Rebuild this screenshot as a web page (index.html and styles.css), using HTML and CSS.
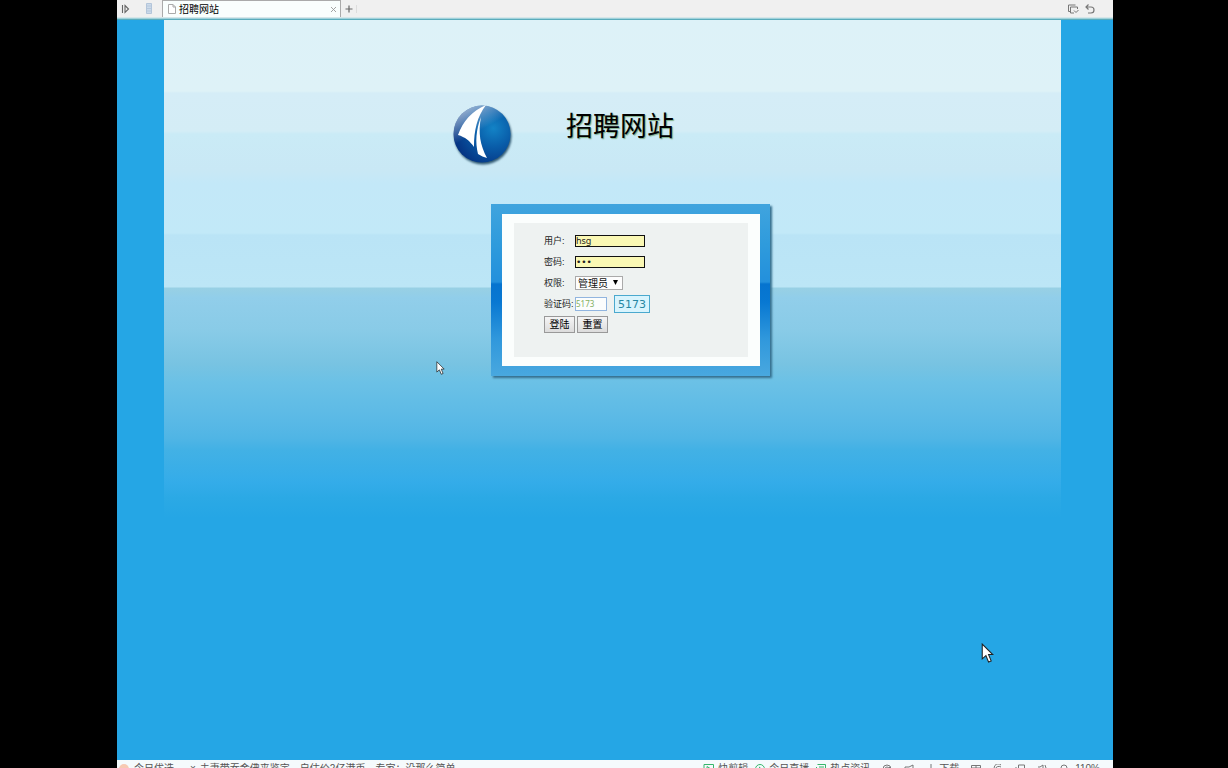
FILE: index.html
```html
<!DOCTYPE html>
<html lang="zh-CN">
<head>
<meta charset="utf-8">
<title>招聘网站</title>
<link rel="stylesheet" href="styles.css">
</head>
<body>
<div class="browser">
  <header class="tabbar">
    <button class="icon-button expand" aria-label="展开"><svg width="10" height="10" viewBox="0 0 10 10"><path d="M1.500 1v8M4 1.500 7.500 5 4 8.500z" fill="none" stroke="#666" stroke-width="1.100"/></svg></button>
    <button class="icon-button reader" aria-label="阅读"><svg width="8" height="11" viewBox="0 0 8 11"><path d="M1.500.5h5v10h-5z" fill="#ccdaea" stroke="#b3c5da"/><path d="M2 3h4M2 5.500h4M2 8h4" stroke="#b6c8dc"/></svg></button>
    <div class="tab">
      <svg width="8" height="10" viewBox="0 0 8 10"><path d="M.5.500h4.500l2.500 2.500v6.500h-7zM5 .5V3h2.500" fill="#fff" stroke="#aaa"/></svg>
      <span class="tab-title">招聘网站</span>
      <button class="icon-button" aria-label="关闭"><svg width="7" height="7" viewBox="0 0 7 7"><path d="m1 1 5 5M6 1 1 6" stroke="#999" stroke-width=".9"/></svg></button>
    </div>
    <button class="icon-button add" aria-label="新标签"><svg width="8" height="8" viewBox="0 0 8 8"><path d="M4 .5v7M.5 4h7" stroke="#666" stroke-width="1.200"/></svg></button>
    <div class="tools">
      <button class="icon-button" aria-label="标签列表"><svg width="12" height="10" viewBox="0 0 12 10"><path d="M8.500 1h-7v6.500h2M10.500 5V3h-7v6H7M7 6.500l2 2 2.500-2.500" fill="none" stroke="#777"/></svg></button>
      <button class="icon-button" aria-label="撤销"><svg width="10" height="10" viewBox="0 0 10 10"><path d="M3.500.5 1 3l2.500 2.500M1 3h5a3 3 0 0 1 0 6H3" fill="none" stroke="#777" stroke-width="1.200"/></svg></button>
    </div>
  </header>
  <main class="page">
    <section class="scene">
      <div class="brand">
        <svg class="logo" width="62" height="63" viewBox="0 0 62 63">
          <defs>
            <radialGradient id="ball" cx=".7" cy=".4" r=".72"><stop offset="0" stop-color="#1383c6"/><stop offset=".45" stop-color="#095da9"/><stop offset="1" stop-color="#053382"/></radialGradient>
            <linearGradient id="shine" x1=".2" y1="0" x2=".45" y2=".45"><stop offset="0" stop-color="#fff" stop-opacity=".65"/><stop offset="1" stop-color="#fff" stop-opacity="0"/></linearGradient>
          </defs>
          <circle cx="29" cy="30" r="28.500" fill="url(#ball)"/>
          <circle cx="29" cy="30" r="28.500" fill="url(#shine)"/>
          <path d="M33 1C19 7 10 17 5 31c7 2 12 6 16 12 0-17 3-30 12-42z" fill="#fff"/>
          <path d="M28 13c-5 13-6 25-3 37 3 2 6 3 9 4-7-13-9-25-6-41z" fill="#fff"/>
        </svg>
        <h1 class="title">招聘网站</h1>
      </div>
      <div class="login">
        <div class="login-inner">
          <form class="form">
            <div class="row"><label for="user">用户:</label><input class="field saved" id="user" type="text" value="hsg"></div>
            <div class="row"><label for="pass">密码:</label><input class="field saved password" id="pass" type="password" value="123"></div>
            <div class="row"><label for="role">权限:</label><select class="role" id="role"><option>管理员</option></select></div>
            <div class="row"><label for="code">验证码:</label><input class="field code" id="code" type="text" value="5173"><output class="captcha">5173</output></div>
            <div class="row buttons"><button type="button">登陆</button><button type="button">重置</button></div>
          </form>
        </div>
      </div>
    </section>
  </main>
  <footer class="status">
    <svg width="10" height="10" viewBox="0 0 10 10"><circle cx="5" cy="5" r="5" fill="#f7c9b3"/></svg>
    <span class="pick">今日优选</span>
    <span class="mark">×</span>
    <span>夫妻带吞金佛来鉴定，自估价2亿港币，专家：没那么简单</span>
    <div class="status-tools">
      <span class="item"><svg width="12" height="10" viewBox="0 0 12 10"><path d="M1 .5h9.500v9H1zM4 2.500 8 5 4 7.500z" fill="none" stroke="#36b56b"/></svg>快剪辑</span>
      <span class="item"><svg width="12" height="10" viewBox="0 0 12 10"><circle cx="6" cy="5" r="4.500" fill="none" stroke="#36b56b"/><path d="m5 2.500 3 2.500-3 2.500z" fill="#36b56b"/></svg>今日直播</span>
      <span class="item"><svg width="12" height="10" viewBox="0 0 12 10"><path d="M2.500.5h8v9h-9V3M4 3h5M4 5h5" fill="none" stroke="#36b56b"/></svg>热点资讯</span>
      <div class="glyphs">
        <svg width="10" height="10" viewBox="0 0 10 10"><path d="M1 5a4 4 0 1 1 8 0M3 5a2 2 0 1 1 4 0M2 9l6-6" fill="none" stroke="#777"/></svg>
        <svg width="10" height="10" viewBox="0 0 10 10"><path d="M1 3h4l4-2v8L4 6H1z" fill="none" stroke="#777"/></svg>
        <span class="item"><svg width="10" height="10" viewBox="0 0 10 10"><path d="M5 0v8M2 4l3 3 3-3" fill="none" stroke="#777"/></svg>下载</span>
        <svg width="10" height="10" viewBox="0 0 10 10"><path d="M.5 1.500h9v7h-9zM5 1v8M1 4h8" fill="none" stroke="#777"/></svg>
        <svg width="10" height="10" viewBox="0 0 10 10"><path d="M8 1a4 4 0 1 0 1 4H3a3 2 0 0 1 5-2" fill="none" stroke="#777"/></svg>
        <svg width="10" height="10" viewBox="0 0 10 10"><path d="M3.500 1h6v7h-6zM1 3v5h4" fill="none" stroke="#777"/></svg>
        <svg width="10" height="10" viewBox="0 0 10 10"><path d="M1 3h2l3-2v8L3 6H1M8 1q2 3 0 6" fill="none" stroke="#777"/></svg>
        <svg width="10" height="10" viewBox="0 0 10 10"><circle cx="5" cy="4" r="3" fill="none" stroke="#777"/></svg>
      </div>
      <span>110%</span>
    </div>
  </footer>
</div>
<svg class="cursor small" width="9" height="14" viewBox="0 0 12 19"><path d="M1 1v14l3.500-3 2.500 6 2.500-1-2.500-6H11z" fill="#fff" stroke="#222"/></svg>
<svg class="cursor large" width="13" height="20" viewBox="0 0 12 19"><path d="M1 1v14l3.500-3 2.500 6 2.500-1-2.500-6H11z" fill="#fff" stroke="#222"/></svg>
</body>
</html>
```

FILE: styles.css
```css
* { box-sizing: border-box; }
body {
  margin: 0;
  background: #000;
  font-family: "Liberation Sans", "Noto Sans CJK SC", sans-serif;
  color: #222;
  overflow: hidden;
}
.browser {
  display: flex;
  flex-direction: column;
  height: 100vh;
  margin: 0 115px 0 117px;
}
.icon-button {
  display: flex;
  padding: 0;
  border: 0;
  background: none;
}
.tabbar {
  display: flex;
  align-items: center;
  flex: none;
  height: 20px;
  padding-bottom: 3px;
  background: linear-gradient(#f0f0f0 17px, #c4d4d8 17px, #e8f8fa 18px, #5aacbc 19px);
}
.expand { margin-left: 4px; }
.reader { margin-left: 14px; }
.tab {
  display: flex;
  align-items: center;
  width: 179px;
  height: 17px;
  margin-left: 9px;
  padding: 0 3px 0 5px;
  border: 1px solid #aaa;
  border-bottom: 0;
  background: #f9fefd;
}
.tab-title {
  flex: 1;
  margin-left: 3px;
  font-size: 10px;
  line-height: 15px;
  color: #000;
}
.add { margin-left: 4px; padding-right: 3px; border-right: 1px solid #ddd; }
.tools {
  display: flex;
  gap: 6px;
  margin-left: auto;
  padding-right: 18px;
}
.page {
  flex: 1;
  min-height: 0;
  padding: 0 52px 0 47px;
  background: #25a6e5;
}
.scene {
  height: 498px;
  padding-top: 84px;
  background: linear-gradient(
    #ddf2f8 0, #def2f7 71px, #d5edf7 73px, #d4edf6 111px,
    #caebf6 114px, #c9e8f5 150px, #c3e8f8 163px, #c2e9f8 213px,
    #bae4f6 215px, #bce6f6 267px, #98d0e4 268px, #91ceea 278px,
    #89cbe7 310px, #77c3e2 345px, #6bc1e6 362px, #5ab9e6 400px,
    #50b5e5 418px, #42b1e5 430px, #34ace9 462px, #2ba9e5 478px, #25a6e5 498px);
}
.brand {
  display: flex;
  align-items: flex-start;
  height: 100px;
  padding-left: 289px;
}
.logo { filter: drop-shadow(1px 2px 1px #2f5872); }
.title {
  margin: 5px 0 0 51px;
  font-size: 27px;
  line-height: 36px;
  font-weight: 400;
  color: #000;
  text-shadow: 1px 1px 1px #7fae8a;
}
.login {
  width: 279px;
  margin-left: 327px;
  padding: 10px 10px 10px 11px;
  background: linear-gradient(#40a4de, #2f9bdc 40px, #2390dc 78px, #0674cf 80px, #0878d2 98px, #3098dc 135px, #49a8df);
  box-shadow: 2px 2px 2px #36708f;
}
.login-inner {
  padding: 9px 12px;
  background: #fbfefd;
}
.form {
  height: 134px;
  padding: 7px 0 0 30px;
  background: #eef2f1;
}
.row {
  display: flex;
  align-items: center;
  height: 21px;
  font-size: 9px;
}
.row label { width: 31px; white-space: nowrap; }
.field {
  width: 70px;
  height: 12px;
  margin: 0;
  padding: 0;
  border: 1px solid #111;
  font-family: "Noto Sans", sans-serif;
  font-size: 9px;
  line-height: 10px;
  color: #222;
}
.saved { background: #faf8b4; }
.password { font-family: "DejaVu Sans", sans-serif; }
.role {
  width: 48px;
  height: 14px;
  padding: 1px 0 0 2px;
  border: 1px solid #aaa;
  appearance: none;
  background: #fdfdfd url("data:image/svg+xml,%3Csvg xmlns='http://www.w3.org/2000/svg' width='5' height='5'%3E%3Cpath d='M0 0h5L2.500 5z'/%3E%3C/svg%3E") no-repeat 37px 3px;
  font: 10px/12px "Liberation Sans", "Noto Sans CJK SC", sans-serif;
  color: #111;
}
.field.code {
  width: 32px;
  height: 14px;
  border: 1px solid #91b5df;
  background: #fbfdfd;
  font-size: 8px;
  color: #84b05f;
}
.captcha {
  width: 36px;
  height: 18px;
  margin-left: 7px;
  border: 1px solid #4aa9ce;
  background: #d8f4fd;
  font: 11px/17px "DejaVu Sans", sans-serif;
  text-align: center;
  color: #2787a2;
}
.buttons { gap: 2px; }
.buttons button {
  width: 31px;
  height: 17px;
  padding: 0;
  border: 1px solid #999;
  background: linear-gradient(#f5f5f5, #dcdcdc);
  font: 10px/14px "Liberation Sans", "Noto Sans CJK SC", sans-serif;
  color: #000;
}
.status {
  display: flex;
  align-items: flex-start;
  flex: none;
  height: 8px;
  padding: 2px 13px 0 2px;
  overflow: hidden;
  background: #f5fafc;
  font-size: 10px;
  line-height: 14px;
  color: #555;
  white-space: nowrap;
}
.status svg { flex: none; margin-top: 2px; }
.pick { margin-left: 5px; }
.mark { margin: 0 4px 0 16px; }
.status-tools {
  display: flex;
  gap: 6px;
  margin-left: auto;
}
.item { display: flex; gap: 3px; }
.glyphs { display: flex; gap: 12px; margin-left: 6px; }
.cursor { position: absolute; }
.small { left: 436px; top: 361px; }
.large { left: 981px; top: 643px; }
```
